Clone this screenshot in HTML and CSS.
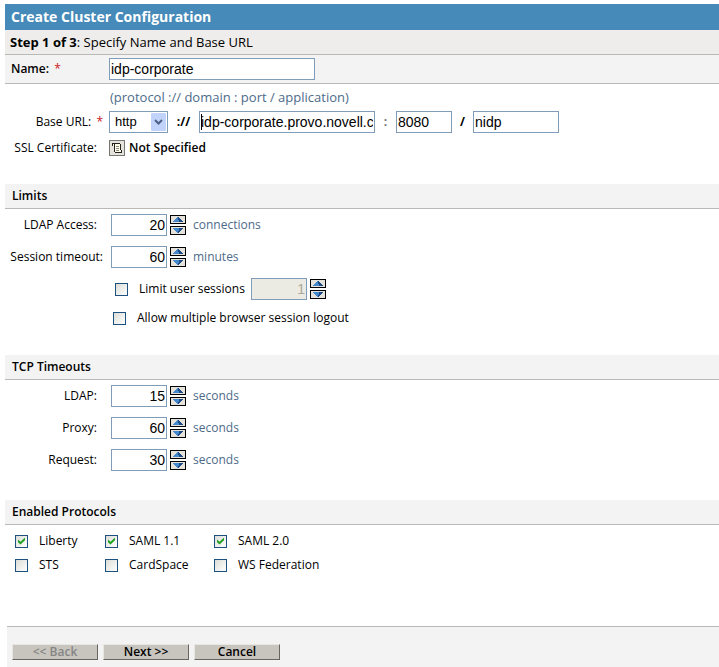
FILE: index.html
```html
<!DOCTYPE html>
<html lang="en">
<head>
    <meta charset="UTF-8">
    <meta name="viewport" content="width=device-width, initial-scale=1.0">
    <title>Create Cluster Configuration</title>
    <link rel="stylesheet" href="styles.css">
</head>
<body>
    <!-- Shared icons -->
    <svg class="symbols" aria-hidden="true">
        <symbol id="spin-up" viewBox="0 0 16 9">
            <rect x="0.5" y="0.5" width="15" height="8" fill="#e4e2da" stroke="#000"/>
            <path d="M3 7V6h1V5h1V4h1V3h1V2h2v1h1v1h1v1h1v1h1v1z" fill="#4589cc"/>
            <path d="M8 2h1v1h1v1h1v1h1v1h1v1H9V5H8z" fill="#1d4b85"/>
        </symbol>
        <symbol id="spin-down" viewBox="0 0 16 9">
            <rect x="0.5" y="0.5" width="15" height="8" fill="#e4e2da" stroke="#000"/>
            <path d="M3 2h10v1h-1v1h-1v1h-1v1H9v1H7V6H6V5H5V4H4V3H3z" fill="#4589cc"/>
            <path d="M9 2h4v1h-1v1h-1v1h-1v1H9v1H8V5h1z" fill="#1d4b85"/>
        </symbol>
    </svg>

    <form class="wizard">
        <h1 class="title">Create Cluster Configuration</h1>
        <h2 class="step"><b>Step 1 of 3</b>: Specify Name and Base URL</h2>

        <div class="name-bar">
            <label for="name">Name: <span class="required">*</span></label>
            <input class="field name" id="name" type="text" value="idp-corporate">
        </div>

        <section class="base">
            <p class="hint">(protocol :// domain : port / application)</p>
            <div class="row">
                <label class="label url-label" for="protocol">Base URL: <span class="required">*</span></label>
                <span class="select">
                    <select class="field" id="protocol">
                        <option>http</option>
                        <option>https</option>
                    </select>
                    <svg class="arrow" viewBox="0 0 15 18" aria-hidden="true">
                        <rect width="15" height="18" rx="1" fill="#c1d3fb"/>
                        <path d="M4 7l3.5 3.5L11 7" fill="none" stroke="#4d6185" stroke-width="2"/>
                    </svg>
                </span>
                <b class="sep">://</b>
                <input class="field domain" type="text" value="idp-corporate.provo.novell.com" aria-label="Domain">
                <b class="sep colon">:</b>
                <input class="field port" type="text" value="8080" aria-label="Port">
                <b class="sep">/</b>
                <input class="field app" type="text" value="nidp" aria-label="Application">
            </div>
            <div class="row cert">
                <span class="label">SSL Certificate:</span>
                <button class="cert-button" type="button" aria-label="Select certificate">
                    <svg viewBox="0 0 16 16" aria-hidden="true">
                        <rect x="0.5" y="0.5" width="15" height="15" fill="#e4e2da" stroke="#777"/>
                        <path d="M3 3h8v7h2v3H6l-1-1V6H3z" fill="#fffde8"/>
                        <path d="M3 3h8v1H3zM3 4h1v2H3zM5 4h1v8H5zM11 4h1v6h-1zM6 12h7v1H6zM12 10h1v2h-1z" fill="#222"/>
                        <path d="M7 6h3v1H7zM7 8h3v1H7zM7 10h3v1H7z" fill="#888"/>
                    </svg>
                </button>
                <b>Not Specified</b>
            </div>
        </section>

        <section class="limits">
            <h3 class="heading">Limits</h3>
            <div class="row">
                <label class="label" for="access">LDAP Access:</label>
                <input class="field number" id="access" type="text" value="20">
                <span class="spinner">
                    <button type="button" aria-label="Increase"><svg><use href="#spin-up"/></svg></button>
                    <button type="button" aria-label="Decrease"><svg><use href="#spin-down"/></svg></button>
                </span>
                <span class="unit">connections</span>
            </div>
            <div class="row">
                <label class="label long" for="session">Session timeout:</label>
                <input class="field number" id="session" type="text" value="60">
                <span class="spinner">
                    <button type="button" aria-label="Increase"><svg><use href="#spin-up"/></svg></button>
                    <button type="button" aria-label="Decrease"><svg><use href="#spin-down"/></svg></button>
                </span>
                <span class="unit">minutes</span>
            </div>
            <div class="row option">
                <label class="check limit"><input type="checkbox"> Limit user sessions</label>
                <input class="field number" type="text" value="1" aria-label="User sessions" disabled>
                <span class="spinner">
                    <button type="button" aria-label="Increase"><svg><use href="#spin-up"/></svg></button>
                    <button type="button" aria-label="Decrease"><svg><use href="#spin-down"/></svg></button>
                </span>
            </div>
            <div class="row option logout">
                <label class="check"><input type="checkbox"> Allow multiple browser session logout</label>
            </div>
        </section>

        <section class="timeouts">
            <h3 class="heading">TCP Timeouts</h3>
            <div class="row">
                <label class="label" for="ldap">LDAP:</label>
                <input class="field number" id="ldap" type="text" value="15">
                <span class="spinner">
                    <button type="button" aria-label="Increase"><svg><use href="#spin-up"/></svg></button>
                    <button type="button" aria-label="Decrease"><svg><use href="#spin-down"/></svg></button>
                </span>
                <span class="unit">seconds</span>
            </div>
            <div class="row">
                <label class="label" for="proxy">Proxy:</label>
                <input class="field number" id="proxy" type="text" value="60">
                <span class="spinner">
                    <button type="button" aria-label="Increase"><svg><use href="#spin-up"/></svg></button>
                    <button type="button" aria-label="Decrease"><svg><use href="#spin-down"/></svg></button>
                </span>
                <span class="unit">seconds</span>
            </div>
            <div class="row">
                <label class="label" for="request">Request:</label>
                <input class="field number" id="request" type="text" value="30">
                <span class="spinner">
                    <button type="button" aria-label="Increase"><svg><use href="#spin-up"/></svg></button>
                    <button type="button" aria-label="Decrease"><svg><use href="#spin-down"/></svg></button>
                </span>
                <span class="unit">seconds</span>
            </div>
        </section>

        <section class="protocols">
            <h3 class="heading">Enabled Protocols</h3>
            <div class="protocol-grid">
                <label class="check"><input type="checkbox" checked> Liberty</label>
                <label class="check"><input type="checkbox" checked> SAML 1.1</label>
                <label class="check"><input type="checkbox" checked> SAML 2.0</label>
                <label class="check"><input type="checkbox"> STS</label>
                <label class="check"><input type="checkbox"> CardSpace</label>
                <label class="check"><input type="checkbox"> WS Federation</label>
            </div>
        </section>

        <div class="footer">
            <button class="button" type="button" disabled>&lt;&lt; Back</button>
            <button class="button" type="button">Next &gt;&gt;</button>
            <button class="button" type="button">Cancel</button>
        </div>
    </form>
</body>
</html>
```

FILE: styles.css
```css
* {
    box-sizing: border-box;
}
body {
    margin: 4px 0 0 5px;
    background: #fff;
    color: #000;
    font: 12px/16px "Trebuchet MS", "Open Sans", sans-serif;
}
h1, h2, h3, p {
    margin: 0;
}
input, select, button {
    margin: 0;
    font: inherit;
    color: inherit;
}
.symbols {
    display: none;
}
.title {
    padding: 0 6px;
    background: #468ab9;
    color: #fff;
    font-size: 14px;
    line-height: 26px;
}
.step {
    padding: 0 5px;
    background: #eeedeb;
    border-bottom: 1px solid #b9b9b5;
    font-size: 13px;
    font-weight: normal;
    line-height: 24px;
}
.name-bar {
    display: flex;
    align-items: center;
    padding: 3px 0;
    background: #f3f3f3;
    border-bottom: 1px solid #b9b9b5;
    font-weight: 600;
}
.name-bar label {
    width: 104px;
    padding-left: 6px;
}
.required {
    margin-left: 2px;
    color: #c8191e;
    font-weight: normal;
}

/* Fields */
.field {
    height: 22px;
    padding: 0 1px;
    background: #fff;
    border: 1px solid #7f9db9;
    border-radius: 0;
    font: 14px/20px "Liberation Sans", Arial, sans-serif;
}
.field:disabled {
    background: #ebebe4;
    color: #aca899;
}
.name {
    width: 206px;
}
.domain {
    width: 176px;
    background: linear-gradient(#000, #000) 1px 2px / 1px 16px no-repeat #fff;
}
.port {
    width: 56px;
}
.app {
    width: 86px;
}
.number {
    width: 56px;
    text-align: right;
}
.select {
    position: relative;
    width: 59px;
}
.select select {
    appearance: none;
    width: 100%;
    padding-left: 5px;
    font-size: 13px;
}
.arrow {
    position: absolute;
    top: 2px;
    right: 2px;
    width: 15px;
    height: 18px;
    pointer-events: none;
}

/* Rows */
.row {
    display: flex;
    align-items: center;
    height: 22px;
    margin-bottom: 10px;
}
.row b {
    font-weight: 600;
}
.label {
    flex: none;
    width: 106px;
    padding-right: 14px;
    text-align: right;
    white-space: nowrap;
}
.label.long {
    padding-right: 8px;
}
.base {
    padding-bottom: 21px;
}
.base .label {
    width: 104px;
    padding-right: 12px;
}
.base .url-label {
    padding-right: 6px;
}
.base .row {
    margin-bottom: 4px;
}
.hint {
    padding: 5px 0 6px 105px;
    color: #4d6b8a;
    font-size: 13px;
}
.row .sep {
    width: 31px;
    font-weight: bold;
    text-align: center;
}
.row .colon,
.port + .sep {
    width: 21px;
}
.colon {
    color: #777;
}
.cert-button {
    width: 16px;
    height: 16px;
    margin-right: 4px;
    padding: 0;
    background: none;
    border: 0;
}
.cert-button svg {
    display: block;
}
.spinner {
    display: grid;
    gap: 2px;
    margin: 0 7px 0 3px;
}
.spinner button {
    width: 16px;
    height: 9px;
    padding: 0;
    background: none;
    border: 0;
}
.spinner svg {
    display: block;
    width: 16px;
    height: 9px;
}
.unit {
    color: #4d6b8a;
}

/* Sections */
.heading {
    margin-bottom: 5px;
    padding-left: 7px;
    background: #f3f3f3;
    border-bottom: 1px solid #b9b9b5;
    font-size: 12px;
    font-weight: 600;
    line-height: 24px;
}
.limits,
.timeouts {
    padding-bottom: 19px;
}
.protocols {
    padding-bottom: 50px;
}
.check {
    display: flex;
    align-items: center;
    white-space: nowrap;
}
.check input {
    appearance: none;
    flex: none;
    width: 13px;
    height: 13px;
    margin-right: 11px;
    background: linear-gradient(135deg, #dcdcd7, #fff);
    border: 1px solid #1c5180;
}
.check input:checked::before {
    content: "";
    display: block;
    width: 7px;
    height: 7px;
    margin: 2px;
    background: #21a121;
    clip-path: polygon(0 29%, 36% 62%, 100% 0, 100% 40%, 36% 100%, 0 68%);
}
.option {
    padding-left: 110px;
}
.limit {
    width: 136px;
}
.option.logout {
    height: 16px;
    padding-left: 108px;
}
.protocol-grid {
    display: grid;
    grid-template-columns: 90px 109px 1fr;
    row-gap: 8px;
    padding: 3px 10px;
}
.footer {
    display: flex;
    gap: 5px;
    margin-left: 2px;
    padding: 17px 5px 7px;
    background: #f3f3f3;
    border-top: 1px solid #b9b9b5;
}
.button {
    width: 86px;
    height: 16px;
    padding: 0;
    background: #c8c5be;
    border: 1px solid;
    border-color: #e8e6e0 #69645f #69645f #e8e6e0;
    font-weight: 600;
    line-height: 14px;
}
.button:disabled {
    color: #858585;
}
```
